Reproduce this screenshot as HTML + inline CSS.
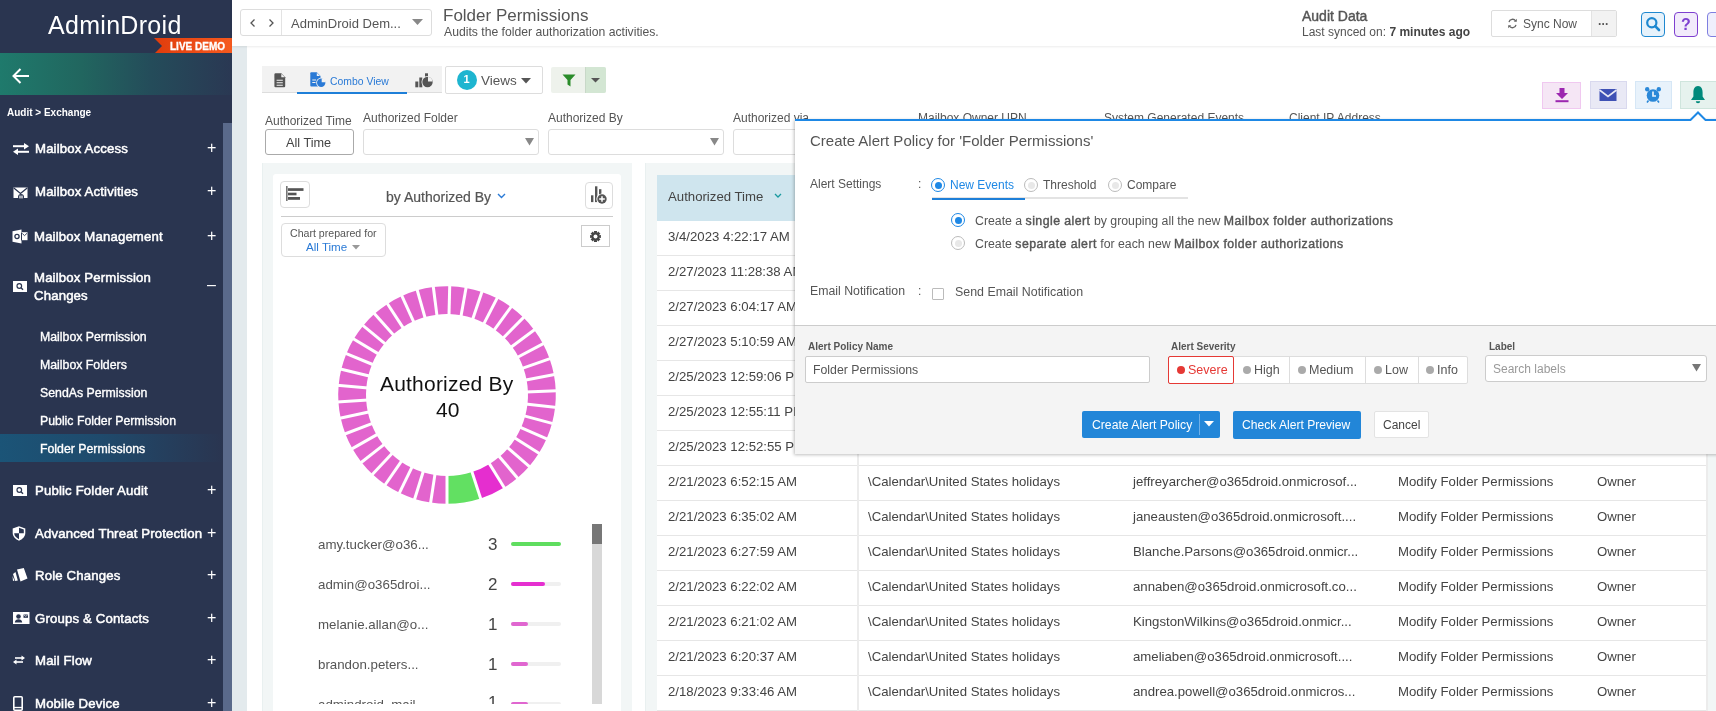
<!DOCTYPE html>
<html><head><meta charset="utf-8">
<style>
*{box-sizing:border-box;margin:0;padding:0}
html,body{width:1716px;height:711px;overflow:hidden;background:#fff;font-family:"Liberation Sans",sans-serif;color:#555}
body{will-change:transform}
.a{position:absolute}
.t{position:absolute;white-space:nowrap;line-height:1}
/* sidebar */
#sb{position:absolute;left:0;top:0;width:232px;height:711px;background:#2a3550}
#sb .mi{position:absolute;left:35px;color:#fff;font-size:13.2px;letter-spacing:0.15px;-webkit-text-stroke:0.5px #fff;white-space:nowrap;line-height:1}
#sb .pl{position:absolute;left:207px;color:#fff;font-size:16px;line-height:1}
#sb .si{position:absolute;left:40px;color:#fff;font-size:12.3px;-webkit-text-stroke:0.35px #fff;white-space:nowrap;line-height:1}
.ic{position:absolute;left:13px}
/* header */
#hd{position:absolute;left:232px;top:0;width:1484px;height:46px;background:#fff;box-shadow:0 1px 2px rgba(0,0,0,.08)}
.box{position:absolute;border:1px solid #ddd;border-radius:3px;background:#fff}
.dots{background-color:#f2f6f6;border-left:1px solid #e9f0f0}
.row{position:absolute;left:657px;width:1051px;height:35px;border-bottom:1px solid #e6e6e6;background:#fff}
.row .t{font-size:13.2px;color:#444;top:9px}
.sevi{position:absolute;top:0;height:27px;border-right:1px solid #ddd;font-size:12.5px;color:#555;line-height:27px;white-space:nowrap}
.pb b{font-weight:normal;letter-spacing:0.45px;-webkit-text-stroke:0.4px #555}
.dot{display:inline-block;width:8px;height:8px;border-radius:50%;background:#aaa;vertical-align:middle;margin-right:4px;position:relative;top:-1px}
</style></head><body>

<!-- SIDEBAR -->
<div id="sb">
  <div class="t" style="left:48px;top:13px;font-size:25px;color:#fff;letter-spacing:0.3px">AdminDroid</div>
  <div class="a" style="left:154px;top:38px;width:78px;height:16px;background:linear-gradient(90deg,#e03c0c,#f65a1f);clip-path:polygon(0 0,100% 0,100% 100%,0 100%,8px 50%)"></div>
  <div class="t" style="left:170px;top:42px;font-size:10px;font-weight:bold;color:#fff;-webkit-text-stroke:0.3px #fff">LIVE DEMO</div>
  <div class="a" style="left:0;top:53px;width:232px;height:42px;background:linear-gradient(90deg,#1f7a6c 0%,#21665f 35%,#244c5a 65%,#2a3853 100%)"></div>
  <svg class="a" style="left:11px;top:67px" width="19" height="18" viewBox="0 0 19 18"><path d="M18 9H3M9.5 2L2.5 9 9.5 16" stroke="#fff" stroke-width="2" fill="none"/></svg>
  <div class="t" style="left:7px;top:108px;font-size:10px;font-weight:bold;color:#fff">Audit &gt; Exchange</div>
  <div class="a" style="left:223px;top:123px;width:9px;height:588px;background:#5a6a8b"></div>


  <svg class="a" style="left:12px;top:143px" width="18" height="12" viewBox="0 0 18 12"><path d="M1 3.2H14" stroke="#fff" stroke-width="2"/><path d="M12 0L17 3.2 12 6.4z" fill="#fff"/><path d="M4 8.8H17" stroke="#fff" stroke-width="2"/><path d="M6 5.6L1 8.8 6 12z" fill="#fff"/></svg>
  <svg class="a" style="left:13px;top:187px" width="16" height="13" viewBox="0 0 16 13"><path d="M0.5 0.5H14.5V11H0.5z" fill="#fff"/><path d="M0.8 1L7.5 6.5 14.2 1" stroke="#2a3550" stroke-width="1.3" fill="none"/><circle cx="8" cy="10" r="3" fill="#2a3550"/><path d="M6 9.2H10M6 10.8H10" stroke="#fff" stroke-width="0.9"/></svg>
  <svg class="a" style="left:12px;top:229px" width="16" height="15" viewBox="0 0 16 15"><path d="M0.5 2.2L9.5 0.5V14.5L0.5 12.8z" fill="#fff"/><rect x="8" y="3.2" width="7.5" height="8" fill="#fff"/><circle cx="5" cy="7.5" r="2.1" stroke="#2a3550" stroke-width="1.3" fill="none"/><path d="M10.3 4.5L12.5 6.6 15 4.3" stroke="#2a3550" stroke-width="0.9" fill="none"/><path d="M9.5 3.5V11.5" stroke="#2a3550" stroke-width="1"/></svg>
  <svg class="a" style="left:13px;top:281px" width="14" height="11" viewBox="0 0 14 11"><rect x="0" y="0" width="14" height="11" fill="#fff"/><circle cx="6.3" cy="5" r="2.3" stroke="#2a3550" stroke-width="1.2" fill="none"/><path d="M8 6.8L10 8.8" stroke="#2a3550" stroke-width="1.4"/></svg>
  <svg class="a" style="left:13px;top:485px" width="14" height="11" viewBox="0 0 14 11"><rect x="0" y="0" width="14" height="11" fill="#fff"/><circle cx="6.3" cy="5" r="2.3" stroke="#2a3550" stroke-width="1.2" fill="none"/><path d="M8 6.8L10 8.8" stroke="#2a3550" stroke-width="1.4"/></svg>
  <svg class="a" style="left:12px;top:526px" width="14" height="15" viewBox="0 0 14 15"><path d="M7 0.3L13.3 2.5V7C13.3 10.5 10.5 13.3 7 14.7 3.5 13.3 0.7 10.5 0.7 7V2.5z" fill="#fff"/><path d="M7 1.8L11.8 3.5V7.3H7z M7 7.3V13.2C4.5 12 2.2 10 2.2 7.3H7z" fill="#2a3550"/></svg>
  <svg class="a" style="left:12px;top:568px" width="16" height="14" viewBox="0 0 16 14"><path d="M5 1.5L11.8 0 15.5 10.5 8.5 13.5z" fill="#fff"/><path d="M3.5 4L5.8 12.5 3.2 13 1 6z" fill="#fff"/><path d="M0.5 8L2.5 12.5 1 13z" fill="#fff"/></svg>
  <svg class="a" style="left:13px;top:612px" width="17" height="12" viewBox="0 0 17 12"><rect x="0" y="0" width="16.5" height="12" fill="#fff"/><circle cx="5.5" cy="4.5" r="2.3" fill="#2a3550"/><path d="M1.8 10.5C2 8 3.5 7.2 5.5 7.2S9 8 9.2 10.5z" fill="#2a3550"/><rect x="10.5" y="2.5" width="4.5" height="3.3" fill="#2a3550"/><path d="M10.7 2.8L12.75 4.3 14.8 2.8" stroke="#fff" stroke-width="0.7" fill="none"/></svg>
  <svg class="a" style="left:12px;top:655px" width="14" height="10" viewBox="0 0 14 10"><path d="M3 3H11" stroke="#fff" stroke-width="1.6"/><path d="M9.5 0.5L13 3 9.5 5.5z" fill="#fff"/><path d="M3 7H11" stroke="#fff" stroke-width="1.6"/><path d="M4.5 4.5L1 7 4.5 9.5z" fill="#fff"/></svg>
  <svg class="a" style="left:13px;top:696px" width="10" height="15" viewBox="0 0 10 15"><rect x="0.8" y="0.8" width="8.4" height="13.4" rx="1" stroke="#fff" stroke-width="1.6" fill="none"/><path d="M1 11.5H9" stroke="#fff" stroke-width="1.3"/></svg>
  <div class="mi" style="top:142px">Mailbox Access</div><div class="pl" style="top:140px">+</div>
  <div class="mi" style="top:185px">Mailbox Activities</div><div class="pl" style="top:183px">+</div>
  <div class="mi" style="top:230px;left:34px">Mailbox Management</div><div class="pl" style="top:228px">+</div>
  <div class="mi" style="top:273px;left:34px;line-height:18px;margin-top:-4px">Mailbox Permission<br>Changes</div><div class="pl" style="top:277px">&#8211;</div>
  <div class="si" style="top:331px">Mailbox Permission</div>
  <div class="si" style="top:359px">Mailbox Folders</div>
  <div class="si" style="top:387px">SendAs Permission</div>
  <div class="a" style="left:0;top:434px;width:223px;height:28px;background:linear-gradient(90deg,#1b5477 0%,#1f4a6c 45%,#2a3550 100%)"></div>
  <div class="si" style="top:415px">Public Folder Permission</div>
  <div class="si" style="top:443px">Folder Permissions</div>
  <div class="mi" style="top:484px">Public Folder Audit</div><div class="pl" style="top:482px">+</div>
  <div class="mi" style="top:527px">Advanced Threat Protection</div><div class="pl" style="top:525px">+</div>
  <div class="mi" style="top:569px">Role Changes</div><div class="pl" style="top:567px">+</div>
  <div class="mi" style="top:612px">Groups &amp; Contacts</div><div class="pl" style="top:610px">+</div>
  <div class="mi" style="top:654px">Mail Flow</div><div class="pl" style="top:652px">+</div>
  <div class="mi" style="top:697px">Mobile Device</div><div class="pl" style="top:695px">+</div>
</div>
<div class="a" style="left:232px;top:46px;width:15px;height:665px;background:#e3eaed"></div>

<!-- HEADER -->
<div id="hd"></div>
<div class="box" style="left:240px;top:9px;width:192px;height:27px"></div>
<div class="a" style="left:281px;top:10px;width:1px;height:25px;background:#e3e3e3"></div>
<svg class="a" style="left:248px;top:17px" width="10" height="12" viewBox="0 0 10 12"><path d="M6.5 2.5L3 6 6.5 9.5" stroke="#555" stroke-width="1.3" fill="none"/></svg>
<svg class="a" style="left:266px;top:17px" width="10" height="12" viewBox="0 0 10 12"><path d="M3.5 2.5L7 6 3.5 9.5" stroke="#555" stroke-width="1.3" fill="none"/></svg>
<div class="t" style="left:291px;top:17px;font-size:13px;color:#555">AdminDroid Dem...</div>
<svg class="a" style="left:412px;top:19px" width="11" height="7" viewBox="0 0 11 7"><path d="M0 0H11L5.5 6z" fill="#888"/></svg>

<div class="t" style="left:443px;top:7px;font-size:17px;color:#555">Folder Permissions</div>
<div class="t" style="left:444px;top:26px;font-size:12.2px;color:#555">Audits the folder authorization activities.</div>

<div class="t" style="left:1302px;top:9px;font-size:14px;color:#555;-webkit-text-stroke:0.4px #555">Audit Data</div>
<div class="t" style="left:1302px;top:26px;font-size:12px;color:#555">Last synced on: <b style="color:#444">7 minutes ago</b></div>

<div class="box" style="left:1491px;top:10px;width:126px;height:27px;border-radius:2px"></div>
<div class="a" style="left:1591px;top:11px;width:25px;height:25px;background:#f2f2f2;border-left:1px solid #e3e3e3"></div>
<div class="t" style="left:1598px;top:18px;font-size:12px;font-weight:bold;color:#555;letter-spacing:-0.5px">&middot;&middot;&middot;</div>
<svg class="a" style="left:1507px;top:18px" width="11" height="11" viewBox="0 0 11 11"><path d="M8.6 3A3.6 3.6 0 0 0 2 4.2M2.4 8A3.6 3.6 0 0 0 9 6.8" stroke="#666" stroke-width="1.3" fill="none"/><path d="M9.8 0.8V3.8H6.8z" fill="#666"/><path d="M1.2 10.2V7.2H4.2z" fill="#666"/></svg>
<div class="t" style="left:1523px;top:18px;font-size:12px;color:#555">Sync Now</div>

<div class="a" style="left:1641px;top:12px;width:24px;height:25px;border:1.5px solid #1e88d0;border-radius:4px;background:#e6f2fb"></div>
<svg class="a" style="left:1645px;top:16px" width="16" height="16" viewBox="0 0 16 16"><circle cx="6.8" cy="6.8" r="4.6" stroke="#1e88d0" stroke-width="2.2" fill="none"/><path d="M10.2 10.2L14 14" stroke="#1e88d0" stroke-width="2.6" stroke-linecap="round"/></svg>
<div class="a" style="left:1674px;top:12px;width:24px;height:25px;border:1.5px solid #7e3fd0;border-radius:4px;background:#f2ebfb"></div>
<div class="t" style="left:1681px;top:17px;font-size:16px;font-weight:bold;color:#7e3fd0">?</div>
<div class="a" style="left:1707px;top:12px;width:24px;height:25px;border:1.5px solid #7f7fe0;border-radius:4px;background:#efeffc"></div>


<!-- TOOLBAR -->
<div class="a" style="left:262px;top:66px;width:180px;height:27px;background:#f2f2f2;border-bottom:1px solid #ddd"></div>
<div class="a" style="left:297px;top:91.5px;width:110px;height:2.5px;background:#1e7fd8"></div>
<svg class="a" style="left:274px;top:73px" width="12" height="15" viewBox="0 0 12 15"><path d="M1.5 0.3H7.3L11.2 4.2V13.2Q11.2 14.3 10.1 14.3H1.5Q0.4 14.3 0.4 13.2V1.4Q0.4 0.3 1.5 0.3z" fill="#555"/><path d="M7.3 0.8V4.2H10.8z" fill="#f2f2f2"/><path d="M2.6 7.2H8.8M2.6 9.8H8.8M2.6 12.3H8.8" stroke="#f2f2f2" stroke-width="1.1"/></svg>
<svg class="a" style="left:310px;top:72px" width="17" height="16" viewBox="0 0 17 16"><path d="M1.2 0.3H6.8L10.5 4V14.5H1.2Q0.3 14.5 0.3 13.6V1.2Q0.3 0.3 1.2 0.3z" fill="#2a7ad6"/><path d="M6.8 0.8V4H10z" fill="#f2f2f2"/><path d="M2.3 8H6M2.3 10.5H5.5" stroke="#f2f2f2" stroke-width="1.1"/><circle cx="11.2" cy="10.7" r="5" fill="#f2f2f2"/><circle cx="11.2" cy="10.7" r="4.2" fill="#2a7ad6"/><path d="M11.7 10.2V6.2A4 4 0 0 1 15.7 10.2z" fill="#f2f2f2"/></svg>
<div class="t" style="left:330px;top:77px;font-size:10.4px;color:#2a7ad6">Combo View</div>
<svg class="a" style="left:415px;top:73px" width="19" height="15" viewBox="0 0 19 15"><rect x="0.3" y="8.5" width="3" height="5.8" fill="#555"/><rect x="4.3" y="4.5" width="3" height="9.8" fill="#555"/><rect x="10" y="0.3" width="3" height="4" fill="#555"/><circle cx="12.5" cy="9" r="6" fill="#f2f2f2"/><circle cx="12.5" cy="9" r="5.2" fill="#555"/><path d="M13 8.5V4A4.5 4.5 0 0 1 17.5 8.5z" fill="#f2f2f2"/></svg>

<div class="box" style="left:445px;top:66px;width:98px;height:28px;border-radius:2px"></div>
<div class="a" style="left:457px;top:69.5px;width:20px;height:20px;border-radius:50%;background:#1eb5d0"></div>
<div class="t" style="left:463.5px;top:74px;font-size:11px;font-weight:bold;color:#fff">1</div>
<div class="t" style="left:481px;top:74px;font-size:13.5px;color:#555">Views</div>
<svg class="a" style="left:521px;top:78px" width="10" height="6" viewBox="0 0 10 6"><path d="M0 0H10L5 5.5z" fill="#555"/></svg>

<div class="a" style="left:551px;top:67px;width:55px;height:26px;border-radius:2px;background:#eef2ec"></div>
<div class="a" style="left:585px;top:67px;width:21px;height:26px;background:#d3e6d3;border-left:1px solid #c8d8c8;border-radius:0 2px 2px 0"></div>
<svg class="a" style="left:562px;top:74px" width="14" height="13" viewBox="0 0 14 13"><path d="M0.5 0.5H13.5L8.5 6V12.5L5.5 10.5V6z" fill="#2a8c2a"/></svg>
<svg class="a" style="left:591px;top:78px" width="9" height="5" viewBox="0 0 9 5"><path d="M0 0H9L4.5 4.5z" fill="#555"/></svg>

<!-- right action buttons -->
<div class="a" style="left:1542px;top:82px;width:39px;height:27px;background:#f5e6f5;border:1px solid #f0c8f0"></div>
<svg class="a" style="left:1553px;top:87px" width="18" height="17" viewBox="0 0 18 17"><path d="M6.5 1H11.5V6H15L9 12 3 6H6.5z" fill="#9c27b0"/><rect x="2.5" y="13.2" width="13" height="2" fill="#9c27b0"/></svg>
<div class="a" style="left:1590px;top:81px;width:37px;height:28px;background:#e9e9f5;border:1px solid #d9d9ee"></div>
<svg class="a" style="left:1599px;top:88px" width="19" height="14" viewBox="0 0 19 14"><rect x="0.5" y="1" width="17" height="12" fill="#3f51b5"/><path d="M0.5 2L9 8.5 17.5 2" stroke="#e9e9f5" stroke-width="1.6" fill="none"/></svg>
<div class="a" style="left:1635px;top:81px;width:37px;height:28px;background:#e8f2fb;border:1px solid #d6e7f6"></div>
<svg class="a" style="left:1644px;top:86px" width="18" height="18" viewBox="0 0 18 18"><circle cx="9" cy="9.5" r="6.3" fill="#2a88d8"/><circle cx="3.2" cy="3.2" r="2.2" fill="#2a88d8"/><circle cx="14.8" cy="3.2" r="2.2" fill="#2a88d8"/><path d="M9 5.5V10H12" stroke="#e8f2fb" stroke-width="1.7" fill="none"/><path d="M4.5 14.5L3 16.5M13.5 14.5L15 16.5" stroke="#2a88d8" stroke-width="1.6"/></svg>
<div class="a" style="left:1680px;top:81px;width:40px;height:28px;background:#e6f2ee;border:1px solid #cfe5dd"></div>
<svg class="a" style="left:1690px;top:85px" width="16" height="20" viewBox="0 0 16 20"><path d="M8 1C4.6 1 3.4 4 3.4 7.5V11.5L1 15H15L12.6 11.5V7.5C12.6 4 11.4 1 8 1z" fill="#00897b"/><path d="M5.8 16.2H10.2A2.2 2 0 0 1 5.8 16.2z" fill="#00897b"/></svg>

<!-- FILTERS -->
<div class="t" style="left:265px;top:115px;font-size:12px;color:#555">Authorized Time</div>
<div class="a" style="left:265px;top:129px;width:89px;height:26px;border:1px solid #aaa;border-radius:3px;background:#fff"></div>
<div class="t" style="left:286px;top:137px;font-size:12.7px;color:#444">All Time</div>
<div class="t" style="left:363px;top:112px;font-size:12px;color:#555">Authorized Folder</div>
<div class="box" style="left:363px;top:129px;width:176px;height:26px"></div>
<svg class="a" style="left:525px;top:138px" width="9" height="8" viewBox="0 0 9 8"><path d="M0 0H9L4.5 7.5z" fill="#888"/></svg>
<div class="t" style="left:548px;top:112px;font-size:12px;color:#555">Authorized By</div>
<div class="box" style="left:548px;top:129px;width:176px;height:26px"></div>
<svg class="a" style="left:710px;top:138px" width="9" height="8" viewBox="0 0 9 8"><path d="M0 0H9L4.5 7.5z" fill="#888"/></svg>
<div class="t" style="left:733px;top:112px;font-size:12px;color:#555">Authorized via</div>
<div class="box" style="left:733px;top:129px;width:176px;height:26px"></div>
<div class="t" style="left:918px;top:112px;font-size:12px;color:#555">Mailbox Owner UPN</div>
<div class="t" style="left:1104px;top:112px;font-size:12px;color:#555">System Generated Events</div>
<div class="t" style="left:1289px;top:112px;font-size:12px;color:#555">Client IP Address</div>

<!-- CHART PANEL -->
<div class="a dots" style="left:262px;top:163px;width:370px;height:548px"></div>
<div class="a" style="left:273px;top:174px;width:348px;height:537px;background:#fff;border-radius:3px 3px 0 0"></div>
<div class="box" style="left:280px;top:181px;width:30px;height:27px;border-radius:4px"></div>
<svg class="a" style="left:285px;top:186px" width="20" height="16" viewBox="0 0 20 16"><rect x="1.2" y="0" width="1.3" height="15" fill="#555"/><rect x="3" y="2.2" width="15.5" height="2.7" fill="#555"/><rect x="3" y="6.7" width="8.5" height="2.6" fill="#555"/><rect x="3" y="11" width="12" height="2.8" fill="#555"/></svg>
<div class="t" style="left:386px;top:190px;font-size:14px;color:#555;-webkit-text-stroke:0.2px #555">by Authorized By</div>
<svg class="a" style="left:497px;top:193px" width="9" height="6" viewBox="0 0 9 6"><path d="M1 1L4.5 4.5 8 1" stroke="#2a7ad6" stroke-width="1.4" fill="none"/></svg>
<div class="box" style="left:585px;top:182px;width:28px;height:27px;border-radius:4px"></div>
<svg class="a" style="left:590px;top:185px" width="18" height="19" viewBox="0 0 18 19"><rect x="1" y="10.3" width="2.4" height="6.8" fill="#555"/><rect x="5" y="1.3" width="2.4" height="15.8" fill="#555"/><rect x="9" y="4.2" width="2.4" height="8" fill="#555"/><circle cx="12" cy="14" r="5.6" fill="#fff"/><circle cx="12" cy="14" r="4.7" fill="#555"/><path d="M12 11.2V16.8M9.2 14H14.8" stroke="#fff" stroke-width="1.5"/></svg>
<div class="a" style="left:281px;top:216px;width:332px;height:1px;background:#ccc"></div>
<div class="box" style="left:281px;top:223px;width:105px;height:34px;border-radius:4px"></div>
<div class="t" style="left:290px;top:228px;font-size:10.6px;color:#555">Chart prepared for</div>
<div class="t" style="left:306px;top:241px;font-size:11.6px;color:#2a7ad6">All Time</div>
<svg class="a" style="left:352px;top:245px" width="8" height="5" viewBox="0 0 8 5"><path d="M0 0H8L4 4.5z" fill="#999"/></svg>
<div class="a" style="left:581px;top:225px;width:29px;height:22px;border:1px solid #ccc;background:#fff"></div>
<svg class="a" style="left:589px;top:230px" width="13" height="13" viewBox="0 0 13 13"><path d="M10.26 5.13 L11.88 4.95 L11.88 8.05 L10.26 7.87 L10.13 8.19 L11.40 9.21 L9.21 11.40 L8.19 10.13 L7.87 10.26 L8.05 11.88 L4.95 11.88 L5.13 10.26 L4.81 10.13 L3.79 11.40 L1.60 9.21 L2.87 8.19 L2.74 7.87 L1.12 8.05 L1.12 4.95 L2.74 5.13 L2.87 4.81 L1.60 3.79 L3.79 1.60 L4.81 2.87 L5.13 2.74 L4.95 1.12 L8.05 1.12 L7.87 2.74 L8.19 2.87 L9.21 1.60 L11.40 3.79 L10.13 4.81z" fill="#444"/><circle cx="6.5" cy="6.5" r="2" fill="#fff"/></svg>
<svg id="donut" class="a" style="left:337px;top:285px" width="220" height="220" viewBox="-110 -110 220 220"><path d="M0.00 108.80A108.8 108.8 0 0 0 33.62 103.47L25.03 77.04A81.0 81.0 0 0 1 0.00 81.00z" fill="#62e062"/><path d="M33.62 103.47A108.8 108.8 0 0 0 57.17 92.57L42.56 68.92A81.0 81.0 0 0 1 25.03 77.04z" fill="#e52ecf"/><path d="M57.17 92.57A108.8 108.8 0 0 0 70.43 82.93L52.43 61.74A81.0 81.0 0 0 1 42.56 68.92z" fill="#e264cd"/><path d="M70.43 82.93A108.8 108.8 0 0 0 82.09 71.41L61.11 53.16A81.0 81.0 0 0 1 52.43 61.74z" fill="#e264cd"/><path d="M82.09 71.41A108.8 108.8 0 0 0 91.88 58.27L68.40 43.38A81.0 81.0 0 0 1 61.11 53.16z" fill="#e264cd"/><path d="M91.88 58.27A108.8 108.8 0 0 0 99.59 43.81L74.14 32.61A81.0 81.0 0 0 1 68.40 43.38z" fill="#e264cd"/><path d="M99.59 43.81A108.8 108.8 0 0 0 105.04 28.35L78.20 21.10A81.0 81.0 0 0 1 74.14 32.61z" fill="#e264cd"/><path d="M105.04 28.35A108.8 108.8 0 0 0 108.11 12.25L80.49 9.12A81.0 81.0 0 0 1 78.20 21.10z" fill="#e264cd"/><path d="M108.11 12.25A108.8 108.8 0 0 0 108.72 -4.13L80.94 -3.08A81.0 81.0 0 0 1 80.49 9.12z" fill="#e264cd"/><path d="M108.72 -4.13A108.8 108.8 0 0 0 106.87 -20.42L79.56 -15.20A81.0 81.0 0 0 1 80.94 -3.08z" fill="#e264cd"/><path d="M106.87 -20.42A108.8 108.8 0 0 0 102.59 -36.24L76.38 -26.98A81.0 81.0 0 0 1 79.56 -15.20z" fill="#e264cd"/><path d="M102.59 -36.24A108.8 108.8 0 0 0 95.98 -51.24L71.46 -38.15A81.0 81.0 0 0 1 76.38 -26.98z" fill="#e264cd"/><path d="M95.98 -51.24A108.8 108.8 0 0 0 87.19 -65.07L64.91 -48.45A81.0 81.0 0 0 1 71.46 -38.15z" fill="#e264cd"/><path d="M87.19 -65.07A108.8 108.8 0 0 0 76.43 -77.43L56.90 -57.65A81.0 81.0 0 0 1 64.91 -48.45z" fill="#e264cd"/><path d="M76.43 -77.43A108.8 108.8 0 0 0 63.93 -88.04L47.60 -65.54A81.0 81.0 0 0 1 56.90 -57.65z" fill="#e264cd"/><path d="M63.93 -88.04A108.8 108.8 0 0 0 49.98 -96.64L37.21 -71.95A81.0 81.0 0 0 1 47.60 -65.54z" fill="#e264cd"/><path d="M49.98 -96.64A108.8 108.8 0 0 0 34.90 -103.05L25.98 -76.72A81.0 81.0 0 0 1 37.21 -71.95z" fill="#e264cd"/><path d="M34.90 -103.05A108.8 108.8 0 0 0 19.02 -107.12L14.16 -79.75A81.0 81.0 0 0 1 25.98 -76.72z" fill="#e264cd"/><path d="M19.02 -107.12A108.8 108.8 0 0 0 2.71 -108.77L2.02 -80.97A81.0 81.0 0 0 1 14.16 -79.75z" fill="#e264cd"/><path d="M2.71 -108.77A108.8 108.8 0 0 0 -13.66 -107.94L-10.17 -80.36A81.0 81.0 0 0 1 2.02 -80.97z" fill="#e264cd"/><path d="M-13.66 -107.94A108.8 108.8 0 0 0 -29.72 -104.66L-22.12 -77.92A81.0 81.0 0 0 1 -10.17 -80.36z" fill="#e264cd"/><path d="M-29.72 -104.66A108.8 108.8 0 0 0 -45.10 -99.01L-33.58 -73.71A81.0 81.0 0 0 1 -22.12 -77.92z" fill="#e264cd"/><path d="M-45.10 -99.01A108.8 108.8 0 0 0 -59.46 -91.11L-44.27 -67.83A81.0 81.0 0 0 1 -33.58 -73.71z" fill="#e264cd"/><path d="M-59.46 -91.11A108.8 108.8 0 0 0 -72.47 -81.15L-53.96 -60.41A81.0 81.0 0 0 1 -44.27 -67.83z" fill="#e264cd"/><path d="M-72.47 -81.15A108.8 108.8 0 0 0 -83.84 -69.34L-62.42 -51.62A81.0 81.0 0 0 1 -53.96 -60.41z" fill="#e264cd"/><path d="M-83.84 -69.34A108.8 108.8 0 0 0 -93.31 -55.96L-69.47 -41.66A81.0 81.0 0 0 1 -62.42 -51.62z" fill="#e264cd"/><path d="M-93.31 -55.96A108.8 108.8 0 0 0 -100.65 -41.31L-74.93 -30.75A81.0 81.0 0 0 1 -69.47 -41.66z" fill="#e264cd"/><path d="M-100.65 -41.31A108.8 108.8 0 0 0 -105.72 -25.72L-78.70 -19.15A81.0 81.0 0 0 1 -74.93 -30.75z" fill="#e264cd"/><path d="M-105.72 -25.72A108.8 108.8 0 0 0 -108.38 -9.55L-80.69 -7.11A81.0 81.0 0 0 1 -78.70 -19.15z" fill="#e264cd"/><path d="M-108.38 -9.55A108.8 108.8 0 0 0 -108.58 6.84L-80.84 5.09A81.0 81.0 0 0 1 -80.69 -7.11z" fill="#e264cd"/><path d="M-108.58 6.84A108.8 108.8 0 0 0 -106.32 23.08L-79.16 17.18A81.0 81.0 0 0 1 -80.84 5.09z" fill="#e264cd"/><path d="M-106.32 23.08A108.8 108.8 0 0 0 -101.65 38.79L-75.68 28.87A81.0 81.0 0 0 1 -79.16 17.18z" fill="#e264cd"/><path d="M-101.65 38.79A108.8 108.8 0 0 0 -94.67 53.61L-70.48 39.92A81.0 81.0 0 0 1 -75.68 28.87z" fill="#e264cd"/><path d="M-94.67 53.61A108.8 108.8 0 0 0 -85.54 67.23L-63.69 50.05A81.0 81.0 0 0 1 -70.48 39.92z" fill="#e264cd"/><path d="M-85.54 67.23A108.8 108.8 0 0 0 -74.48 79.32L-55.45 59.05A81.0 81.0 0 0 1 -63.69 50.05z" fill="#e264cd"/><path d="M-74.48 79.32A108.8 108.8 0 0 0 -61.72 89.60L-45.95 66.71A81.0 81.0 0 0 1 -55.45 59.05z" fill="#e264cd"/><path d="M-61.72 89.60A108.8 108.8 0 0 0 -47.56 97.86L-35.40 72.85A81.0 81.0 0 0 1 -45.95 66.71z" fill="#e264cd"/><path d="M-47.56 97.86A108.8 108.8 0 0 0 -32.32 103.89L-24.06 77.34A81.0 81.0 0 0 1 -35.40 72.85z" fill="#e264cd"/><path d="M-32.32 103.89A108.8 108.8 0 0 0 -16.34 107.57L-12.17 80.08A81.0 81.0 0 0 1 -24.06 77.34z" fill="#e264cd"/><path d="M-16.34 107.57A108.8 108.8 0 0 0 -0.00 108.80L-0.00 81.00A81.0 81.0 0 0 1 -12.17 80.08z" fill="#e264cd"/><path d="M0.00 79.00L0.00 110.80" stroke="#fff" stroke-width="3"/><path d="M24.41 75.13L34.24 105.38" stroke="#fff" stroke-width="3"/><path d="M41.51 67.21L58.22 94.27" stroke="#fff" stroke-width="3"/><path d="M51.14 60.22L71.72 84.45" stroke="#fff" stroke-width="3"/><path d="M59.60 51.85L83.60 72.72" stroke="#fff" stroke-width="3"/><path d="M66.72 42.31L93.57 59.34" stroke="#fff" stroke-width="3"/><path d="M72.31 31.81L101.42 44.61" stroke="#fff" stroke-width="3"/><path d="M76.27 20.58L106.97 28.87" stroke="#fff" stroke-width="3"/><path d="M78.50 8.89L110.10 12.47" stroke="#fff" stroke-width="3"/><path d="M78.94 -3.00L110.72 -4.21" stroke="#fff" stroke-width="3"/><path d="M77.60 -14.82L108.83 -20.79" stroke="#fff" stroke-width="3"/><path d="M74.49 -26.31L104.47 -36.90" stroke="#fff" stroke-width="3"/><path d="M69.69 -37.20L97.74 -52.18" stroke="#fff" stroke-width="3"/><path d="M63.31 -47.25L88.80 -66.27" stroke="#fff" stroke-width="3"/><path d="M55.50 -56.22L77.83 -78.86" stroke="#fff" stroke-width="3"/><path d="M46.42 -63.92L65.11 -89.65" stroke="#fff" stroke-width="3"/><path d="M36.29 -70.17L50.90 -98.42" stroke="#fff" stroke-width="3"/><path d="M25.34 -74.83L35.54 -104.95" stroke="#fff" stroke-width="3"/><path d="M13.81 -77.78L19.37 -109.09" stroke="#fff" stroke-width="3"/><path d="M1.97 -78.98L2.76 -110.77" stroke="#fff" stroke-width="3"/><path d="M-9.92 -78.38L-13.91 -109.92" stroke="#fff" stroke-width="3"/><path d="M-21.58 -76.00L-30.26 -106.59" stroke="#fff" stroke-width="3"/><path d="M-32.75 -71.89L-45.93 -100.83" stroke="#fff" stroke-width="3"/><path d="M-43.18 -66.16L-60.55 -92.79" stroke="#fff" stroke-width="3"/><path d="M-52.62 -58.92L-73.81 -82.64" stroke="#fff" stroke-width="3"/><path d="M-60.88 -50.35L-85.38 -70.61" stroke="#fff" stroke-width="3"/><path d="M-67.75 -40.63L-95.02 -56.99" stroke="#fff" stroke-width="3"/><path d="M-73.08 -29.99L-102.50 -42.07" stroke="#fff" stroke-width="3"/><path d="M-76.76 -18.67L-107.66 -26.19" stroke="#fff" stroke-width="3"/><path d="M-78.70 -6.93L-110.37 -9.72" stroke="#fff" stroke-width="3"/><path d="M-78.84 4.97L-110.58 6.97" stroke="#fff" stroke-width="3"/><path d="M-77.20 16.75L-108.28 23.50" stroke="#fff" stroke-width="3"/><path d="M-73.81 28.16L-103.52 39.50" stroke="#fff" stroke-width="3"/><path d="M-68.74 38.93L-96.41 54.60" stroke="#fff" stroke-width="3"/><path d="M-62.11 48.81L-87.12 68.46" stroke="#fff" stroke-width="3"/><path d="M-54.08 57.59L-75.84 80.77" stroke="#fff" stroke-width="3"/><path d="M-44.81 65.06L-62.85 91.25" stroke="#fff" stroke-width="3"/><path d="M-34.53 71.05L-48.43 99.66" stroke="#fff" stroke-width="3"/><path d="M-23.46 75.43L-32.91 105.80" stroke="#fff" stroke-width="3"/><path d="M-11.87 78.10L-16.64 109.54" stroke="#fff" stroke-width="3"/></svg>
<div class="t" style="left:380px;top:373px;font-size:21px;color:#111;letter-spacing:0.2px">Authorized By</div>
<div class="t" style="left:436px;top:399px;font-size:21px;color:#111">40</div>

<!-- legend -->
<div class="t" style="left:318px;top:538px;font-size:13.3px;color:#555">amy.tucker@o36...</div>
<div class="t" style="left:318px;top:578px;font-size:13.3px;color:#555">admin@o365droi...</div>
<div class="t" style="left:318px;top:618px;font-size:13.3px;color:#555">melanie.allan@o...</div>
<div class="t" style="left:318px;top:658px;font-size:13.3px;color:#555">brandon.peters...</div>
<div class="a" style="left:300px;top:524px;width:290px;height:180px;overflow:hidden">
 <div class="t" style="left:18px;top:174px;font-size:13.3px;color:#555">admindroid_mail...</div>
 <div class="t" style="left:188px;top:170px;font-size:17px;color:#444">1</div>
 <div class="a" style="left:211px;top:178px;width:50px;height:4px;border-radius:2px;background:#f0f0f0"></div>
 <div class="a" style="left:211px;top:178px;width:17px;height:4px;border-radius:2px;background:#e066d0"></div>
</div>
<div class="t" style="left:488px;top:536px;font-size:17px;color:#444">3</div>
<div class="t" style="left:488px;top:576px;font-size:17px;color:#444">2</div>
<div class="t" style="left:488px;top:616px;font-size:17px;color:#444">1</div>
<div class="t" style="left:488px;top:656px;font-size:17px;color:#444">1</div>
<div class="a" style="left:511px;top:542px;width:50px;height:4px;border-radius:2px;background:#5fdd5f"></div>
<div class="a" style="left:511px;top:582px;width:50px;height:4px;border-radius:2px;background:#f0f0f0"></div>
<div class="a" style="left:511px;top:582px;width:34px;height:4px;border-radius:2px;background:#e52fd0"></div>
<div class="a" style="left:511px;top:622px;width:50px;height:4px;border-radius:2px;background:#f0f0f0"></div>
<div class="a" style="left:511px;top:622px;width:17px;height:4px;border-radius:2px;background:#e066d0"></div>
<div class="a" style="left:511px;top:662px;width:50px;height:4px;border-radius:2px;background:#f0f0f0"></div>
<div class="a" style="left:511px;top:662px;width:17px;height:4px;border-radius:2px;background:#e066d0"></div>
<div class="a" style="left:592px;top:524px;width:10px;height:180px;background:#d8d8d8"></div>
<div class="a" style="left:592px;top:524px;width:10px;height:20px;background:#777"></div>

<!-- TABLE PANEL -->
<div class="a dots" style="left:645px;top:163px;width:1071px;height:548px"></div>
<div class="a" style="left:657px;top:175px;width:1051px;height:536px;background:#fff"></div>
<div class="a" style="left:657px;top:175px;width:1051px;height:46px;background:#cfe5ee"></div>
<div class="t" style="left:668px;top:190px;font-size:13.2px;color:#444">Authorized Time</div>
<svg class="a" style="left:774px;top:193px" width="8" height="6" viewBox="0 0 8 6"><path d="M1 1L4 4 7 1" stroke="#1a9aa0" stroke-width="1.3" fill="none"/></svg>
<div class="row" style="top:221px"><div class="t" style="left:11px">3/4/2023 4:22:17 AM</div></div>
<div class="row" style="top:256px"><div class="t" style="left:11px">2/27/2023 11:28:38 AM</div></div>
<div class="row" style="top:291px"><div class="t" style="left:11px">2/27/2023 6:04:17 AM</div></div>
<div class="row" style="top:326px"><div class="t" style="left:11px">2/27/2023 5:10:59 AM</div></div>
<div class="row" style="top:361px"><div class="t" style="left:11px">2/25/2023 12:59:06 PM</div></div>
<div class="row" style="top:396px"><div class="t" style="left:11px">2/25/2023 12:55:11 PM</div></div>
<div class="row" style="top:431px"><div class="t" style="left:11px">2/25/2023 12:52:55 PM</div></div>
<div class="row" style="top:466px"><div class="t" style="left:11px">2/21/2023 6:52:15 AM</div><div class="t" style="left:211px">\Calendar\United States holidays</div><div class="t" style="left:476px">jeffreyarcher@o365droid.onmicrosof...</div><div class="t" style="left:741px">Modify Folder Permissions</div><div class="t" style="left:940px">Owner</div></div>
<div class="row" style="top:501px"><div class="t" style="left:11px">2/21/2023 6:35:02 AM</div><div class="t" style="left:211px">\Calendar\United States holidays</div><div class="t" style="left:476px">janeausten@o365droid.onmicrosoft....</div><div class="t" style="left:741px">Modify Folder Permissions</div><div class="t" style="left:940px">Owner</div></div>
<div class="row" style="top:536px"><div class="t" style="left:11px">2/21/2023 6:27:59 AM</div><div class="t" style="left:211px">\Calendar\United States holidays</div><div class="t" style="left:476px">Blanche.Parsons@o365droid.onmicr...</div><div class="t" style="left:741px">Modify Folder Permissions</div><div class="t" style="left:940px">Owner</div></div>
<div class="row" style="top:571px"><div class="t" style="left:11px">2/21/2023 6:22:02 AM</div><div class="t" style="left:211px">\Calendar\United States holidays</div><div class="t" style="left:476px">annaben@o365droid.onmicrosoft.co...</div><div class="t" style="left:741px">Modify Folder Permissions</div><div class="t" style="left:940px">Owner</div></div>
<div class="row" style="top:606px"><div class="t" style="left:11px">2/21/2023 6:21:02 AM</div><div class="t" style="left:211px">\Calendar\United States holidays</div><div class="t" style="left:476px">KingstonWilkins@o365droid.onmicr...</div><div class="t" style="left:741px">Modify Folder Permissions</div><div class="t" style="left:940px">Owner</div></div>
<div class="row" style="top:641px"><div class="t" style="left:11px">2/21/2023 6:20:37 AM</div><div class="t" style="left:211px">\Calendar\United States holidays</div><div class="t" style="left:476px">ameliaben@o365droid.onmicrosoft....</div><div class="t" style="left:741px">Modify Folder Permissions</div><div class="t" style="left:940px">Owner</div></div>
<div class="row" style="top:676px"><div class="t" style="left:11px">2/18/2023 9:33:46 AM</div><div class="t" style="left:211px">\Calendar\United States holidays</div><div class="t" style="left:476px">andrea.powell@o365droid.onmicros...</div><div class="t" style="left:741px">Modify Folder Permissions</div><div class="t" style="left:940px">Owner</div></div>
<div class="a" style="left:857px;top:221px;width:2px;height:490px;background:#ececec"></div>
<div class="a" style="left:1706px;top:221px;width:2px;height:490px;background:#ececec"></div>

<!-- POPUP -->
<div class="a" style="left:795px;top:119px;width:930px;height:335px;background:#fff;box-shadow:-1px 1px 3px rgba(0,0,0,.25)"></div>
<div class="a" style="left:795px;top:119px;width:921px;height:2px;background:#1e88e5"></div>
<svg class="a" style="left:1688px;top:110px" width="20" height="12" viewBox="0 0 20 12"><path d="M0 10H2L10 2 18 10H20V12H0z" fill="#fff"/><path d="M0 10H2.5L10 2.5 17.5 10H20" stroke="#1e88e5" stroke-width="2" fill="none"/></svg>
<div class="t" style="left:810px;top:133px;font-size:15px;color:#555">Create Alert Policy for 'Folder Permissions'</div>
<div class="t" style="left:810px;top:178px;font-size:12px;color:#555">Alert Settings</div>
<div class="t" style="left:918px;top:178px;font-size:12px;color:#555">:</div>
<div class="a" style="left:932px;top:197px;width:256px;height:2px;background:#e3e3e3"></div>
<div class="a" style="left:932px;top:197.5px;width:93px;height:2.5px;background:#1e7fd8"></div>
<div class="a" style="left:931px;top:178px;width:14px;height:14px;border-radius:50%;border:1.3px solid #1e88e5;background:#fff"></div>
<div class="a" style="left:934.5px;top:181.5px;width:7px;height:7px;border-radius:50%;background:#1e88e5"></div>
<div class="t" style="left:950px;top:179px;font-size:12px;color:#1e88e5">New Events</div>
<div class="a" style="left:1024px;top:178px;width:14px;height:14px;border-radius:50%;border:1px solid #bbb;background:#fff"></div>
<div class="a" style="left:1027.5px;top:181.5px;width:7px;height:7px;border-radius:50%;background:#e8e8e8"></div>
<div class="t" style="left:1043px;top:179px;font-size:12px;color:#555">Threshold</div>
<div class="a" style="left:1108px;top:178px;width:14px;height:14px;border-radius:50%;border:1px solid #bbb;background:#fff"></div>
<div class="a" style="left:1111.5px;top:181.5px;width:7px;height:7px;border-radius:50%;background:#e8e8e8"></div>
<div class="t" style="left:1127px;top:179px;font-size:12px;color:#555">Compare</div>

<div class="a" style="left:951px;top:213px;width:14px;height:14px;border-radius:50%;border:1.3px solid #1e88e5;background:#fff"></div>
<div class="a" style="left:954.5px;top:216.5px;width:7px;height:7px;border-radius:50%;background:#1e88e5"></div>
<div class="t pb" style="left:975px;top:215px;font-size:12.3px;color:#555">Create a <b>single alert</b> by grouping all the new <b>Mailbox folder authorizations</b></div>
<div class="a" style="left:951px;top:236px;width:14px;height:14px;border-radius:50%;border:1px solid #bbb;background:#fff"></div>
<div class="a" style="left:954.5px;top:239.5px;width:7px;height:7px;border-radius:50%;background:#e8e8e8"></div>
<div class="t pb" style="left:975px;top:238px;font-size:12.3px;color:#555">Create <b>separate alert</b> for each new <b>Mailbox folder authorizations</b></div>

<div class="t" style="left:810px;top:285px;font-size:12.3px;color:#555">Email Notification</div>
<div class="t" style="left:918px;top:285px;font-size:12px;color:#555">:</div>
<div class="a" style="left:932px;top:288px;width:12px;height:12px;border:1px solid #bbb;border-radius:1px;background:#fff"></div>
<div class="t" style="left:955px;top:286px;font-size:12.4px;color:#555">Send Email Notification</div>

<div class="a" style="left:795px;top:325px;width:921px;height:129px;background:#f4f4f4;border-top:1px solid #ccc"></div>
<div class="t" style="left:808px;top:342px;font-size:10px;font-weight:bold;color:#555">Alert Policy Name</div>
<div class="a" style="left:805px;top:356px;width:345px;height:27px;border:1px solid #ccc;border-radius:2px;background:#fff"></div>
<div class="t" style="left:813px;top:364px;font-size:12.3px;color:#555">Folder Permissions</div>
<div class="t" style="left:1171px;top:342px;font-size:10px;font-weight:bold;color:#555">Alert Severity</div>
<div class="a" style="left:1168px;top:356px;width:300px;height:28px;border:1px solid #ddd;border-radius:2px;background:#fff"></div>
<div class="a" style="left:1168px;top:356px;width:66px;height:28px;border:1px solid #e53935;border-radius:2px"></div>
<div class="a" style="left:1177px;top:366px;width:8px;height:8px;border-radius:50%;background:#e53935"></div>
<div class="t" style="left:1188px;top:364px;font-size:12.5px;color:#e53935">Severe</div>
<div class="a" style="left:1289px;top:357px;width:1px;height:26px;background:#ddd"></div>
<div class="a" style="left:1243px;top:366px;width:8px;height:8px;border-radius:50%;background:#aaa"></div>
<div class="t" style="left:1254px;top:364px;font-size:12.5px;color:#555">High</div>
<div class="a" style="left:1365px;top:357px;width:1px;height:26px;background:#ddd"></div>
<div class="a" style="left:1298px;top:366px;width:8px;height:8px;border-radius:50%;background:#aaa"></div>
<div class="t" style="left:1309px;top:364px;font-size:12.5px;color:#555">Medium</div>
<div class="a" style="left:1418px;top:357px;width:1px;height:26px;background:#ddd"></div>
<div class="a" style="left:1374px;top:366px;width:8px;height:8px;border-radius:50%;background:#aaa"></div>
<div class="t" style="left:1385px;top:364px;font-size:12.5px;color:#555">Low</div>
<div class="a" style="left:1426px;top:366px;width:8px;height:8px;border-radius:50%;background:#aaa"></div>
<div class="t" style="left:1437px;top:364px;font-size:12.5px;color:#555">Info</div>
<div class="t" style="left:1489px;top:342px;font-size:10px;font-weight:bold;color:#555">Label</div>
<div class="a" style="left:1485px;top:355px;width:222px;height:27px;border:1px solid #ccc;border-radius:3px;background:#fff"></div>
<div class="t" style="left:1493px;top:363px;font-size:12px;color:#999">Search labels</div>
<svg class="a" style="left:1692px;top:364px" width="9" height="8" viewBox="0 0 9 8"><path d="M0 0H9L4.5 7.5z" fill="#777"/></svg>

<div class="a" style="left:1082px;top:411px;width:138px;height:27px;background:#2286d8;border-radius:2px"></div>
<div class="a" style="left:1199px;top:414px;width:1px;height:21px;background:#6fb0e8"></div>
<div class="t" style="left:1092px;top:419px;font-size:12.2px;color:#fff">Create Alert Policy</div>
<svg class="a" style="left:1204px;top:421px" width="10" height="6" viewBox="0 0 10 6"><path d="M0 0H10L5 5.5z" fill="#fff"/></svg>
<div class="a" style="left:1233px;top:411px;width:128px;height:28px;background:#2286d8;border-radius:2px"></div>
<div class="t" style="left:1242px;top:419px;font-size:12.1px;color:#fff">Check Alert Preview</div>
<div class="a" style="left:1374px;top:411px;width:55px;height:27px;background:#fff;border:1px solid #e3e3e3;border-radius:2px"></div>
<div class="t" style="left:1383px;top:419px;font-size:12px;color:#444">Cancel</div>

</body></html>
